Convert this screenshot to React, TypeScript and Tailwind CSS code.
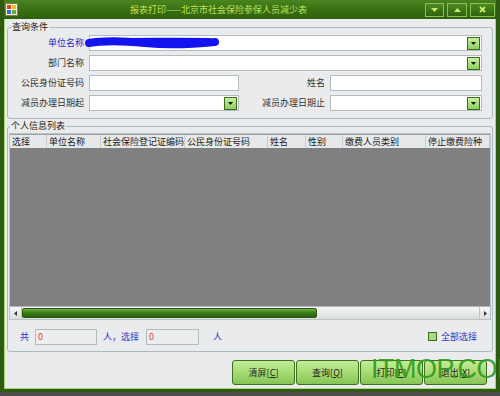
import React from 'react';

const font = { fontFamily: '"Noto Sans CJK SC", "Noto Sans", sans-serif' };

const DropBtn: React.FC = () => (
    <span className="w-[13px] h-[13px] bg-gradient-to-b from-[#c8f0a0] to-[#8cd060] border border-[#3c6a1c] flex items-center justify-center shrink-0">
        <svg width="5" height="3" viewBox="0 0 5 3"><path d="M0 0h5L2.5 3z" fill="#111" /></svg>
    </span>
);

const Field: React.FC<{ w: string; drop?: boolean; children?: React.ReactNode }> = ({ w, drop, children }) => (
    <div className={`${w} h-[16px] bg-white border border-[#b4bcc0] flex items-center justify-end pr-[1px] relative`}>
        {children}
        {drop && <DropBtn />}
    </div>
);

const TitleBtn: React.FC<{ w: string; children: React.ReactNode }> = ({ w, children }) => (
    <div className={`${w} h-[14px] border border-[#8cc050] bg-gradient-to-b from-[#4c8a22] to-[#2f6210] flex items-center justify-center`}>
        {children}
    </div>
);

const ActionBtn: React.FC<{ label: string; k: string }> = ({ label, k }) => (
    <button className="w-[63px] h-[25px] rounded-[3px] border border-[#3f7020] bg-gradient-to-b from-[#c4ec98] via-[#a6dc74] to-[#86c454] text-[9px] text-[#222] flex items-center justify-center">
        {label}[<span className="underline">{k}</span>]
    </button>
);

const headers: [string, string][] = [
    ['选择', 'w-[37px]'],
    ['单位名称', 'w-[54px]'],
    ['社会保险登记证编码', 'w-[84px]'],
    ['公民身份证号码', 'w-[83px]'],
    ['姓名', 'w-[38px]'],
    ['性别', 'w-[37px]'],
    ['缴费人员类别', 'w-[83px]'],
    ['停止缴费险种', 'flex-1'],
];

export default function App() {
    return (
        <div className="w-[500px] h-[396px] bg-[#4e4e4e] overflow-hidden relative" style={font}>
            <div className="h-[392px] flex flex-col border-l-[4px] border-r-[4px] border-b-[3px] border-[#2f5a10]">
                {/* title bar */}
                <div className="h-[19px] bg-gradient-to-b from-[#4a8420] via-[#3a7014] to-[#2f600e] flex items-center pl-[1px] pr-[1px]">
                    <svg width="13" height="13" viewBox="0 0 13 13" className="shrink-0">
                        <rect x="0.5" y="0.5" width="12" height="12" fill="#f4f0e0" stroke="#8a7a50" />
                        <rect x="2" y="2" width="4" height="4" fill="#e04020" />
                        <rect x="7" y="2" width="4" height="4" fill="#f0c020" />
                        <rect x="2" y="7" width="4" height="4" fill="#3070d0" />
                        <rect x="7" y="7" width="4" height="4" fill="#60b040" />
                    </svg>
                    <span className="ml-[112px] text-[9px] text-[#bce258] whitespace-nowrap">报表打印——北京市社会保险参保人员减少表</span>
                    <div className="ml-auto flex gap-[3px] items-center">
                        <TitleBtn w="w-[19px]">
                            <svg width="7" height="4" viewBox="0 0 7 4"><path d="M0 0h7L3.5 4z" fill="#c8ec60" /></svg>
                        </TitleBtn>
                        <TitleBtn w="w-[20px]">
                            <svg width="7" height="4" viewBox="0 0 7 4"><path d="M0 4h7L3.5 0z" fill="#c8ec60" /></svg>
                        </TitleBtn>
                        <TitleBtn w="w-[25px]">
                            <svg width="7" height="7" viewBox="0 0 7 7"><path d="M1 1l5 5M6 1l-5 5" stroke="#c8ec60" strokeWidth="1.8" /></svg>
                        </TitleBtn>
                    </div>
                </div>

                {/* body */}
                <div className="flex-1 bg-[#e9ebec] border-l border-r border-b border-[#a6d878] px-[2px] pt-[2px] flex flex-col">
                    <fieldset className="border border-[#a9bac2] rounded-[3px] pl-[2px] pb-[7px]">
                        <legend className="text-[9px] text-[#222] px-[1px] ml-[1px] leading-[12px]">查询条件</legend>
                        <div className="grid grid-cols-[74px_150px_81px_152px] grid-rows-[16px_16px_16px_16px] gap-x-[5px] gap-y-[4px] items-center text-[9px] text-[#333] mt-[2px]">
                            <span className="text-right text-[#2a2ac0]">单位名称</span>
                            <div className="col-span-3 relative">
                                <Field w="w-[393px]" drop />
                                <svg width="140" height="16" viewBox="0 0 140 16" className="absolute left-[-4px] top-[0px]">
                                    <path d="M4 8 C20 5 40 6 60 8 S100 10 130 7" stroke="#1414f0" strokeWidth="8" strokeLinecap="round" fill="none" />
                                    <path d="M10 6 C40 4 80 5 124 5" stroke="#1414f0" strokeWidth="4" strokeLinecap="round" fill="none" />
                                </svg>
                            </div>
                            <span className="text-right">部门名称</span>
                            <div className="col-span-3"><Field w="w-[393px]" drop /></div>
                            <span className="text-right">公民身份证号码</span>
                            <Field w="w-[150px]" />
                            <span className="text-right">姓名</span>
                            <Field w="w-[152px]" />
                            <span className="text-right">减员办理日期起</span>
                            <Field w="w-[150px]" drop />
                            <span className="text-right">减员办理日期止</span>
                            <Field w="w-[152px]" drop />
                        </div>
                    </fieldset>

                    <fieldset className="border border-[#a9bac2] rounded-[3px] px-[1px] pb-[2px] mt-[1px]">
                        <legend className="text-[9px] text-[#222] px-[1px] ml-[1px] leading-[12px]">个人信息列表</legend>
                        <div className="border border-[#b8c4c8] flex flex-col h-[187px] mt-[1px]">
                            <div className="h-[14px] flex bg-[#e6e8ea] border-t border-[#9aa0a4] text-[9px] text-[#222] leading-[13px]">
                                {headers.map(([h, w]) => (
                                    <div key={h} className={`${w} px-[2px] border-r border-[#c8cccf] whitespace-nowrap overflow-hidden`}>{h}</div>
                                ))}
                            </div>
                            <div className="flex-1 bg-[#808080]" />
                            <div className="h-[13px] flex bg-gradient-to-b from-[#f6f6f6] to-[#dcdede] border-t border-[#b0b8bc]">
                                <div className="w-[12px] border-r border-[#c0c4c6] flex items-center justify-center">
                                    <svg width="3" height="5" viewBox="0 0 3 5"><path d="M3 0v5L0 2.5z" fill="#333" /></svg>
                                </div>
                                <div className="w-[295px] my-[1px] rounded-[2px] border border-[#2c5a10] bg-gradient-to-b from-[#6cb040] via-[#3a7a18] to-[#2a6010]" />
                                <div className="flex-1" />
                                <div className="w-[11px] border-l border-[#c0c4c6] flex items-center justify-center">
                                    <svg width="3" height="5" viewBox="0 0 3 5"><path d="M0 0v5L3 2.5z" fill="#333" /></svg>
                                </div>
                            </div>
                        </div>
                        <div className="flex items-center h-[25px] mt-[4px] text-[9px] text-[#3434c4]">
                            <span className="ml-[11px]">共</span>
                            <div className="ml-[6px] w-[62px] h-[16px] border border-[#b4bcc0] bg-[#eceeee] text-[#e04040] pl-[2px] leading-[14px]">0</div>
                            <span className="ml-[6px]">人，选择</span>
                            <div className="ml-[7px] w-[53px] h-[16px] border border-[#b4bcc0] bg-[#eceeee] text-[#e04040] pl-[2px] leading-[14px]">0</div>
                            <span className="ml-[14px]">人</span>
                            <span className="ml-auto w-[9px] h-[9px] border border-[#3c6a1c] bg-[#a8dc80]" />
                            <span className="ml-[4px] mr-[14px]">全部选择</span>
                        </div>
                    </fieldset>

                    <div className="flex justify-end gap-[1px] mt-[8px] pr-[6px]">
                        <ActionBtn label="清屏" k="C" />
                        <ActionBtn label="查询" k="Q" />
                        <ActionBtn label="打印" k="P" />
                        <ActionBtn label="退出" k="X" />
                    </div>
                </div>
            </div>
            <span className="absolute left-[371px] top-[354px] text-[27px] leading-[30px] text-[#2f9a1c] tracking-[-0.5px] opacity-90" style={{ fontFamily: '"Liberation Sans", sans-serif' }}>ITMOP.COM</span>
        </div>
    );
}
